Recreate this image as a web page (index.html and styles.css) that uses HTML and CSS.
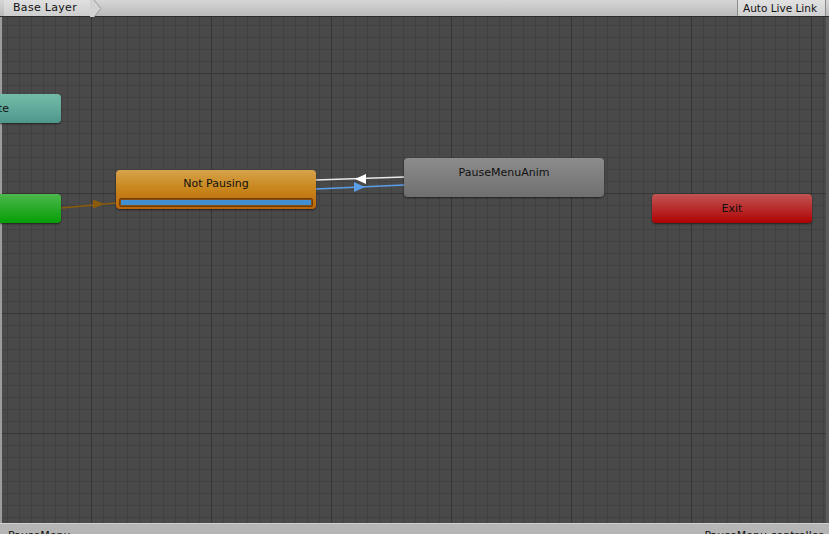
FILE: index.html
```html
<!DOCTYPE html>
<html>
<head>
<meta charset="utf-8">
<link rel="stylesheet" href="styles.css">
</head>
<body>
<div class="window">
  <div class="toolbar">
    <div class="crumb">Base Layer
      <svg class="crumb-tip" width="12" height="17" viewBox="0 0 12 17"><path d="M0 0 H4 L11 8.5 L4 17 H0 Z" fill="#d2d2d2"/><path d="M4 0 L11 8.5 L4 17" fill="none" stroke="#9a9a9a" stroke-width="1"/></svg>
    </div>
    <div class="spacer"></div>
    <div class="btn">Auto Live Link</div>
  </div>
  <div class="canvas">
    <div class="edge-left"></div>
    <div class="edge-right"></div>
    <svg class="links" width="829" height="506" viewBox="0 0 829 506">
      <line x1="61" y1="191" x2="116" y2="186" stroke="#8a5c0c" stroke-width="1.5"/>
      <polygon points="104,187 93,182.5 93,191.5" fill="#8a5c0c"/>
      <line x1="404" y1="160" x2="316" y2="163" stroke="#e8e8e8" stroke-width="1.5"/>
      <polygon points="355,162 366,157 366,167" fill="#ffffff"/>
      <line x1="316" y1="172" x2="404" y2="168" stroke="#5b9ee8" stroke-width="1.5"/>
      <polygon points="365,170 354,165 354,175" fill="#5b9ee8"/>
    </svg>
    <div class="node teal"><span class="any">Any State</span></div>
    <div class="node green"></div>
    <div class="node orange">
      <div class="label">Not Pausing</div>
      <div class="progress"><div class="fill"></div></div>
    </div>
    <div class="node gray"><div class="label">PauseMenuAnim</div></div>
    <div class="node red"><div class="label">Exit</div></div>
  </div>
  <div class="statusbar">
    <span>PauseMenu</span>
    <span>PauseMenu.controller</span>
  </div>
</div>
</body>
</html>
```
FILE: styles.css
```css
html, body {
  margin: 0;
  padding: 0;
  width: 829px;
  height: 534px;
  overflow: hidden;
  background: #484848;
  font-family: "DejaVu Sans", "Liberation Sans", sans-serif;
}
.window {
  width: 829px;
  height: 534px;
  display: flex;
  flex-direction: column;
}
.toolbar {
  height: 17px;
  flex: 0 0 17px;
  display: flex;
  align-items: stretch;
  background: linear-gradient(#d6d6d6, #bababa);
  border-bottom: 1px solid #2c2c2c;
  box-sizing: border-box;
  font-size: 11px;
  color: #111;
}
.crumb {
  position: relative;
  margin-left: 4px;
  padding-left: 9px;
  width: 78px;
  line-height: 16px;
  letter-spacing: 0.3px;
  background: linear-gradient(#e0e0e0, #cdcdcd);
}
.crumb-tip {
  position: absolute;
  right: -11px;
  top: 0;
}
.spacer { flex: 1; }
.btn {
  line-height: 16px;
  font-size: 10.5px;
  padding: 0 8px 0 5px;
  margin-right: 3px;
  background: linear-gradient(#e2e2e2, #cfcfcf);
  border-left: 1px solid #8c8c8c;
  border-right: 1px solid #8c8c8c;
}
.canvas {
  position: relative;
  flex: 1;
  overflow: hidden;
  background-color: #494949;
  background-image:
    linear-gradient(to right, #363636 1px, transparent 1px),
    linear-gradient(to bottom, #363636 1px, transparent 1px),
    linear-gradient(to right, #414141 1px, transparent 1px),
    linear-gradient(to bottom, #414141 1px, transparent 1px);
  background-size: 120px 120px, 120px 120px, 12px 12px, 12px 12px;
  background-position: 91px 0, 0 56px, 7px 0, 0 8px;
}
.edge-left {
  position: absolute;
  left: 0; top: 0; bottom: 0;
  width: 2px;
  background: #9c9c9c;
}
.edge-right {
  position: absolute;
  right: 0; top: 0; bottom: 0;
  width: 3px;
  background: #5c5c5c;
}
.links {
  position: absolute;
  left: 0; top: 0;
}
.node {
  position: absolute;
  box-sizing: border-box;
  border-radius: 4px;
  box-shadow: 0 1px 2px rgba(0,0,0,0.55);
  font-size: 11px;
  color: #111;
  text-align: center;
}
.label { line-height: 28px; }
.teal {
  left: -139px; top: 77px;
  width: 200px; height: 29px;
  background: linear-gradient(#74bca8, #4f978c);
  text-align: right;
  padding-right: 52px;
  line-height: 29px;
}
.green {
  left: -99px; top: 177px;
  width: 160px; height: 29px;
  background: linear-gradient(#4cb84c, #069e06);
}
.orange {
  left: 116px; top: 153px;
  width: 200px; height: 39px;
  background: linear-gradient(#d6a24c, #c9881e 45%, #b96508);
  padding: 0 3px;
}
.orange .label { line-height: 28px; }
.progress {
  height: 9px;
  border: 1px solid #6e3e06;
  border-radius: 2px;
  box-sizing: border-box;
  background: #8a4f0a;
  padding: 1px;
}
.fill {
  height: 100%;
  width: 100%;
  background: #3f8fd2;
}
.gray {
  left: 404px; top: 141px;
  width: 200px; height: 39px;
  background: linear-gradient(#8c8c8c, #6f6f6f);
}
.gray .label { line-height: 30px; }
.red {
  left: 652px; top: 177px;
  width: 160px; height: 29px;
  background: linear-gradient(#c25454, #b00202);
}
.red .label { line-height: 29px; }
.statusbar {
  flex: 0 0 11px;
  height: 11px;
  background: #b5b5b5;
  border-top: 1px solid #d0d0d0;
  box-sizing: border-box;
  display: flex;
  justify-content: space-between;
  font-size: 11px;
  color: #111;
  padding: 5px 6px 0 8px;
  line-height: 13px;
  overflow: hidden;
}
```
